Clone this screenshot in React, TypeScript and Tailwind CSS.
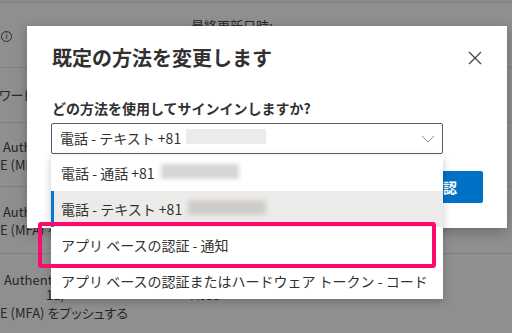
import React from "react";

const FONT = { fontFamily: '"Noto Sans CJK JP", "Noto Sans", sans-serif' };

function Blur({ w, cls }: { w: number; cls: string }) {
  return <span className={`inline-block h-[15px] ${cls}`} style={{ width: w }} />;
}

export default function App() {
  return (
    <div className="relative w-[512px] h-[333px] overflow-hidden bg-[#8f8f8f] text-[#262626]" style={FONT}>
      {/* background page */}
      <div className="flex flex-col text-[13px] leading-[18px] [font-feature-settings:'palt']">
        <div className="h-[3px] border-b border-[#7f7f7f] bg-[#8a8a8a]" />
        <div className="h-[65px] flex border-b border-[#7f7f7f]">
          <div className="w-[191px] flex items-center pl-[1px] pt-[2px]">
            <span className="w-[11px] h-[11px] rounded-full border border-[#2a2a2a] flex items-center justify-center text-[8px] leading-none">i</span>
          </div>
          <div className="pt-[14px]">最終更新日時:</div>
        </div>
        <div className="h-[55px] flex items-center border-b border-[#7f7f7f]">
          <span className="ml-[-25px]">パスワード</span>
        </div>
        <div className="h-[64px] flex flex-col justify-center border-b border-[#7f7f7f] pt-[2px]">
          <span className="pl-[3px]">Authenticator アプリ</span>
          <span className="pl-[0px]">E (MFA) をプッシュする</span>
        </div>
        <div className="h-[67px] flex flex-col justify-center border-b border-[#7f7f7f] pt-[2px]">
          <span className="pl-[3px]">Authenticator アプリ</span>
          <span className="pl-[0px]">E (MFA) をプッシュする</span>
        </div>
        <div className="flex flex-col pt-[17px]">
          <span className="pl-[4px]">Authenticator アプリ</span>
          <div className="flex h-[15px]">
            <span className="w-[191px] pl-[46px] leading-[12px]">11)</span>
            <span className="leading-[12px]">A059</span>
          </div>
          <span className="pl-[0px]">E (MFA) をプッシュする</span>
        </div>
      </div>

      {/* modal */}
      <div className="absolute left-[27px] top-[26px] w-[480px] h-[202px] bg-white shadow-[0_4px_12px_rgba(0,0,0,0.25)] flex flex-col px-[24px] pt-[18px] text-[#323130]">
        <div className="flex items-center justify-between">
          <div className="text-[20px] leading-[28px] font-semibold pl-[1px]">既定の方法を変更します</div>
          <svg width="14" height="14" viewBox="0 0 14 14" className="mr-[1px]">
            <path d="M1 1 L13 13 M13 1 L1 13" stroke="#424242" strokeWidth="1.2" fill="none" />
          </svg>
        </div>
        <div className="mt-[26px] text-[14px] leading-[20px] font-semibold pl-[1px]">どの方法を使用してサインインしますか?</div>
        <div className="mt-[5px] w-[392px] h-[31px] border border-[#605e5c] rounded-[2px] flex items-center pl-[8px] pr-[7px] text-[14px]">
          <span>電話 - テキスト +81</span>
          <span className="ml-[5px]"><Blur w={80} cls="bg-[#ebebeb]" /></span>
          <svg width="14" height="8" viewBox="0 0 14 8" className="ml-auto">
            <path d="M1 1 L7 7 L13 1" stroke="#8a8886" strokeWidth="1" fill="none" />
          </svg>
        </div>
        <div className="mt-[17px] flex justify-end">
          <div className="w-[80px] h-[32px] rounded-[2px] bg-[#0072c6] text-white text-[14px] font-semibold flex items-center justify-center">確認</div>
        </div>
      </div>

      {/* dropdown */}
      <div className="absolute left-[51px] top-[155px] w-[392px] h-[144px] bg-white shadow-[0_3px_8px_rgba(0,0,0,0.22)] flex flex-col text-[14px] text-[#323130]">
        <div className="h-[36px] flex items-center pl-[10px]">
          <span>電話 - 通話 +81</span>
          <span className="ml-[6px] blur-[2px]"><Blur w={78} cls="bg-[#d6d6d6]" /></span>
        </div>
        <div className="h-[36px] flex items-center pl-[7px] bg-[#edebe9] border-l-[3px] border-[#0078d4]">
          <span>電話 - テキスト +81</span>
          <span className="ml-[6px] blur-[2px]"><Blur w={78} cls="bg-[#cfcdcb]" /></span>
        </div>
        <div className="h-[36px] flex items-center pl-[10px] pt-[1px]">アプリ ベースの認証 - 通知</div>
        <div className="h-[36px] flex items-center pl-[10px]">アプリ ベースの認証またはハードウェア トークン - コード</div>
      </div>

      {/* highlight */}
      <div className="absolute left-[38px] top-[222px] w-[398px] h-[46px] border-[4px] border-[#fb0b6c] rounded-[3px]" />
    </div>
  );
}
